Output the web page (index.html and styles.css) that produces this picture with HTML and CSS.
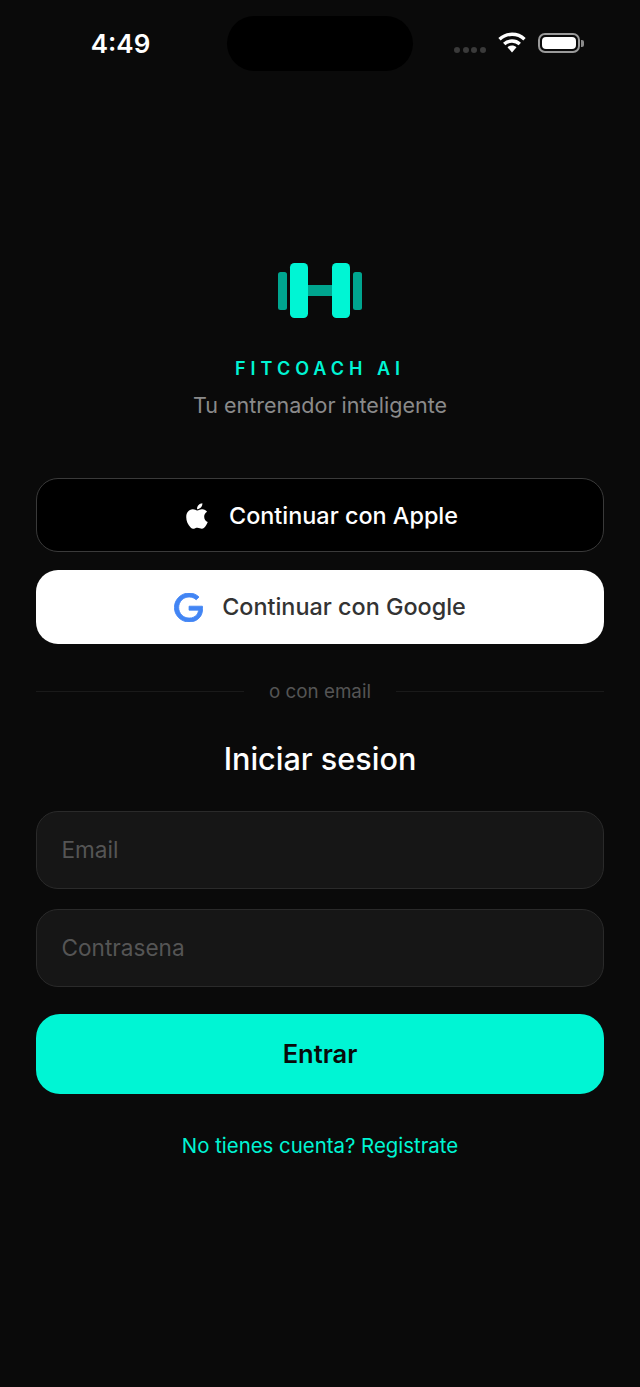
FILE: index.html
```html
<!DOCTYPE html>
<html lang="en">
<head>
    <meta charset="UTF-8">
    <meta name="viewport" content="width=device-width, initial-scale=1.0">
    <title>FitCoach AI</title>
    <link rel="stylesheet" href="styles.css">
</head>
<body>
    <div class="status-bar">
        <div class="time">4:49</div>
        <div class="island"></div>
        <div class="status-icons">
            <div class="signal"><span></span><span></span><span></span><span></span></div>
            <svg class="wifi" width="28" height="21" viewBox="0 0 28 21">
                <path d="M1.5 7.2C8.5 .6 19.5 .6 26.5 7.2" fill="none" stroke="#fff" stroke-width="3.4"/>
                <path d="M6.2 12C10.6 8 17.4 8 21.8 12" fill="none" stroke="#fff" stroke-width="3.4"/>
                <path d="M9.5 15.2C12.1 13 15.9 13 18.5 15.2L14 20.5Z" fill="#fff"/>
            </svg>
            <div class="battery"><div class="battery-fill"></div></div>
            <div class="battery-cap"></div>
        </div>
    </div>

    <div class="container">
        <div class="brand">
            <svg class="logo" width="84" height="55" viewBox="0 0 84 55">
                <rect x="0" y="9" width="9" height="38" rx="2.5" fill="#00a58f"/>
                <rect x="75" y="9" width="9" height="38" rx="2.5" fill="#00a58f"/>
                <rect x="28" y="22" width="28" height="11" rx="2" fill="#00a58f"/>
                <rect x="12" y="0" width="18" height="55" rx="4.5" fill="#00f5d4"/>
                <rect x="54" y="0" width="18" height="55" rx="4.5" fill="#00f5d4"/>
            </svg>
            <div class="brand-name">FITCOACH AI</div>
            <div class="tagline">Tu entrenador inteligente</div>
        </div>

        <button class="social-btn apple-btn">
            <svg width="34" height="34" viewBox="0 0 24 24" fill="#fff">
                <path d="M17.05 20.28c-.98.95-2.05.8-3.08.35-1.09-.46-2.09-.48-3.24 0-1.44.62-2.2.44-3.06-.35C2.79 15.25 3.51 7.59 9.05 7.31c1.35.07 2.29.74 3.08.8 1.18-.24 2.31-.93 3.57-.84 1.51.12 2.65.72 3.4 1.8-3.12 1.87-2.38 5.98.48 7.13-.57 1.5-1.31 2.99-2.54 4.09zM12.03 7.25c-.15-2.23 1.66-4.07 3.74-4.25.29 2.58-2.34 4.5-3.74 4.25z"/>
            </svg>
            Continuar con Apple
        </button>
        <button class="social-btn google-btn">
            <svg width="29" height="29" viewBox="0 0 24 24" fill="#4285f4" stroke="#4285f4" stroke-width=".7">
                <path d="M12.48 10.92v3.28h7.84c-.24 1.84-.853 3.187-1.787 4.133-1.147 1.147-2.933 2.4-6.053 2.4-4.827 0-8.6-3.893-8.6-8.72s3.773-8.72 8.6-8.72c2.6 0 4.507 1.027 5.907 2.347l2.307-2.307C18.747 1.44 16.133 0 12.48 0 5.867 0 .307 5.387.307 12s5.56 12 12.173 12c3.573 0 6.267-1.173 8.373-3.36 2.16-2.16 2.84-5.213 2.84-7.667 0-.76-.053-1.467-.173-2.053H12.48z"/>
            </svg>
            Continuar con Google
        </button>

        <div class="divider"><span>o con email</span></div>

        <h2>Iniciar sesion</h2>

        <input class="field" type="text" placeholder="Email">
        <input class="field" type="password" placeholder="Contrasena">
        <button class="submit-btn">Entrar</button>

        <div class="register-link">No tienes cuenta? Registrate</div>
    </div>
</body>
</html>
```

FILE: styles.css
```css
* {
    box-sizing: border-box;
}
html, body {
    height: 100%;
}
body {
    margin: 0;
    background-color: #0a0a0a;
    color: #fff;
    font-family: Inter, "Liberation Sans", sans-serif;
    overflow: hidden;
}
.status-bar {
    display: grid;
    grid-template-columns: 227px 186px 227px;
    height: 71px;
    padding-top: 16px;
}
.time {
    font-size: 26px;
    font-weight: 600;
    line-height: 55px;
    text-align: center;
    padding-left: 14px;
}
.island {
    height: 55px;
    background: #000;
    border-radius: 28px;
}
.status-icons {
    display: flex;
    align-items: center;
    padding-left: 41px;
}
.signal {
    display: flex;
    gap: 2.5px;
    margin-top: 13px;
    margin-right: 12px;
}
.signal span {
    width: 6px;
    height: 6px;
    border-radius: 50%;
    background: #3a3a3a;
}
.wifi {
    margin-right: 12px;
    margin-top: -2px;
}
.battery {
    width: 42px;
    height: 20px;
    margin-top: -1px;
    border: 2px solid #9a9a9a;
    border-radius: 7px;
    padding: 2px;
}
.battery-fill {
    height: 100%;
    background: #fff;
    border-radius: 4px;
}
.battery-cap {
    width: 3px;
    height: 7px;
    margin-left: 1px;
    margin-top: -1px;
    background: #8a8a8a;
    border-radius: 0 2px 2px 0;
}
.container {
    padding: 0 36px;
}
.brand {
    display: flex;
    flex-direction: column;
    align-items: center;
    padding-top: 192px;
}
.logo {
    display: block;
}
.brand-name {
    margin-top: 39px;
    font-size: 18px;
    font-weight: 600;
    line-height: 24px;
    letter-spacing: 5px;
    color: #00f5d4;
}
.tagline {
    margin-top: 11px;
    font-size: 21.5px;
    line-height: 26px;
    color: #8a8a8a;
}
.social-btn {
    display: flex;
    align-items: center;
    justify-content: center;
    width: 100%;
    height: 74px;
    border-radius: 22px;
    font-family: inherit;
    font-size: 23.4px;
    font-weight: 500;
    line-height: 28px;
}
.apple-btn {
    margin-top: 60px;
    padding: 1px 8px 0 6px;
    gap: 15px;
    background: #000;
    color: #fff;
    border: 1px solid #3a3a3a;
}
.google-btn {
    margin-top: 18px;
    gap: 19px;
    background: #fff;
    color: #333;
    border: none;
}
.divider {
    display: flex;
    align-items: center;
    gap: 25px;
    margin-top: 34px;
    font-size: 18.8px;
    line-height: 24px;
    color: #555;
}
.divider span {
    padding-top: 2px;
}
.divider::before,
.divider::after {
    content: "";
    flex: 1;
    height: 1px;
    background: #1a1a1a;
}
h2 {
    margin: 35px 0 0;
    text-align: center;
    font-size: 30.6px;
    font-weight: 500;
    line-height: 40px;
}
.field {
    display: block;
    width: 100%;
    height: 77.5px;
    margin-top: 32px;
    padding: 0 24.5px;
    background: #161616;
    border: 1px solid #2a2a2a;
    border-radius: 22px;
    color: #fff;
    font-family: inherit;
    font-size: 22.6px;
}
.field + .field {
    margin-top: 20.5px;
}
.field::placeholder {
    color: #555;
}
.submit-btn {
    display: block;
    width: 100%;
    height: 80px;
    margin-top: 27.5px;
    padding-bottom: 2px;
    background: #00f5d4;
    border: none;
    border-radius: 24px;
    color: #0a0a0a;
    font-family: inherit;
    font-size: 25.5px;
    font-weight: 600;
}
.register-link {
    margin-top: 39px;
    text-align: center;
    font-size: 20.4px;
    line-height: 26px;
    color: #00f5d4;
}
```
